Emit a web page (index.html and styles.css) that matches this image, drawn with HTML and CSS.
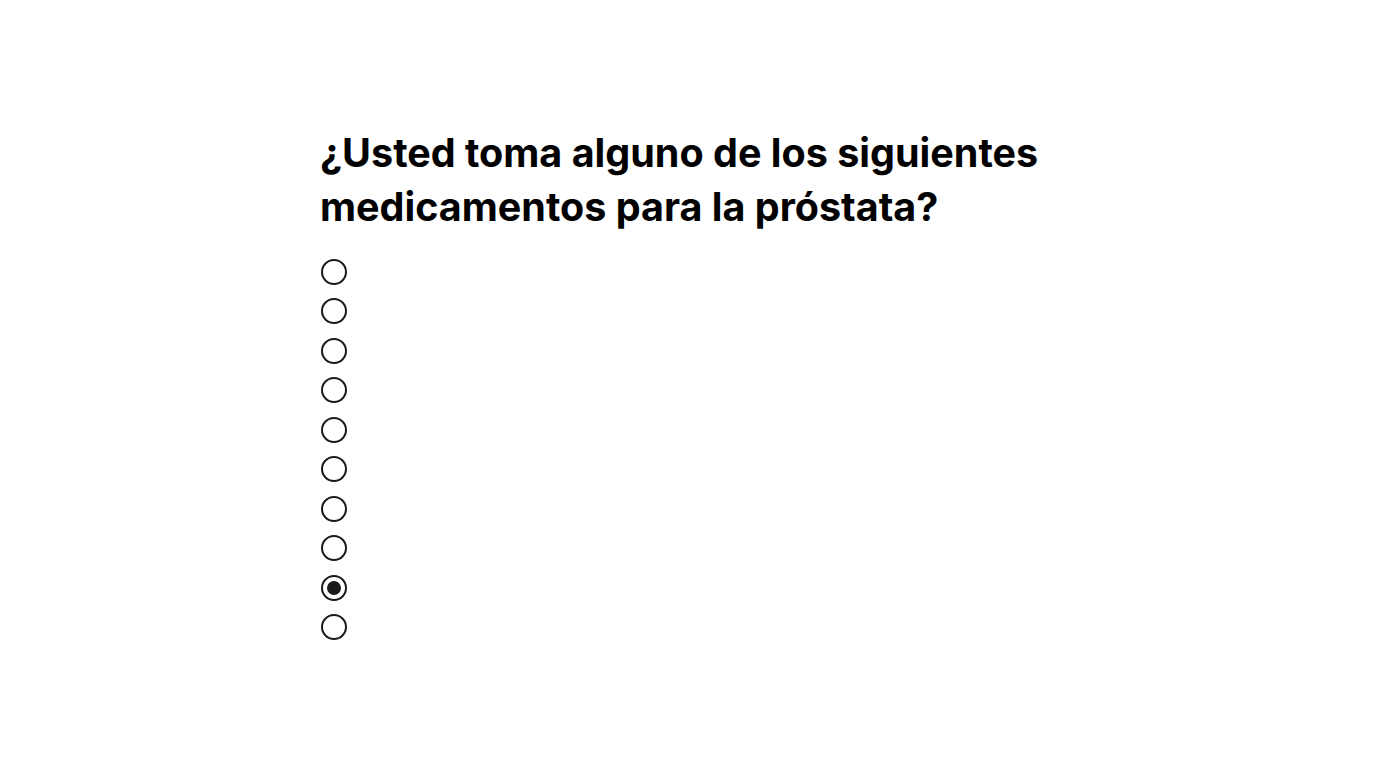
FILE: index.html
```html
<!DOCTYPE html>
<html lang="es">
<head>
<meta charset="utf-8">
<title>Pregunta</title>
<link rel="stylesheet" href="styles.css">
</head>
<body>
<main class="page">
  <section class="question">
    <h1 class="title">¿Usted toma alguno de los siguientes medicamentos para la próstata?</h1>
    <div class="options">
      <label class="option"><input class="radio" type="radio" name="med"></label>
      <label class="option"><input class="radio" type="radio" name="med"></label>
      <label class="option"><input class="radio" type="radio" name="med"></label>
      <label class="option"><input class="radio" type="radio" name="med"></label>
      <label class="option"><input class="radio" type="radio" name="med"></label>
      <label class="option"><input class="radio" type="radio" name="med"></label>
      <label class="option"><input class="radio" type="radio" name="med"></label>
      <label class="option"><input class="radio" type="radio" name="med"></label>
      <label class="option"><input class="radio" type="radio" name="med" checked></label>
      <label class="option"><input class="radio" type="radio" name="med"></label>
    </div>
  </section>
</main>
</body>
</html>
```

FILE: styles.css
```css
html, body {
  margin: 0;
  padding: 0;
  background: #ffffff;
}

body {
  font-family: Inter, "Noto Sans", sans-serif;
  color: #000000;
}

.page {
  display: flex;
  justify-content: center;
  padding-top: 126px;
}

.question {
  width: 736px;
}

.title {
  margin: 0;
  font-size: 39.5px;
  line-height: 54px;
  font-weight: 700;
  letter-spacing: 0;
}

.options {
  display: flex;
  flex-direction: column;
  margin-top: 25px;
  gap: 13.44px;
}

.option {
  display: flex;
  align-items: center;
  height: 26px;
}

.radio {
  appearance: none;
  -webkit-appearance: none;
  margin: 0 0 0 0.5px;
  width: 26px;
  height: 26px;
  border: 2px solid #1a1a1a;
  border-radius: 50%;
  background: #fff;
  display: grid;
  place-items: center;
  box-sizing: border-box;
}

.radio:checked::before {
  content: "";
  width: 14px;
  height: 14px;
  border-radius: 50%;
  background: #1a1a1a;
}
```
